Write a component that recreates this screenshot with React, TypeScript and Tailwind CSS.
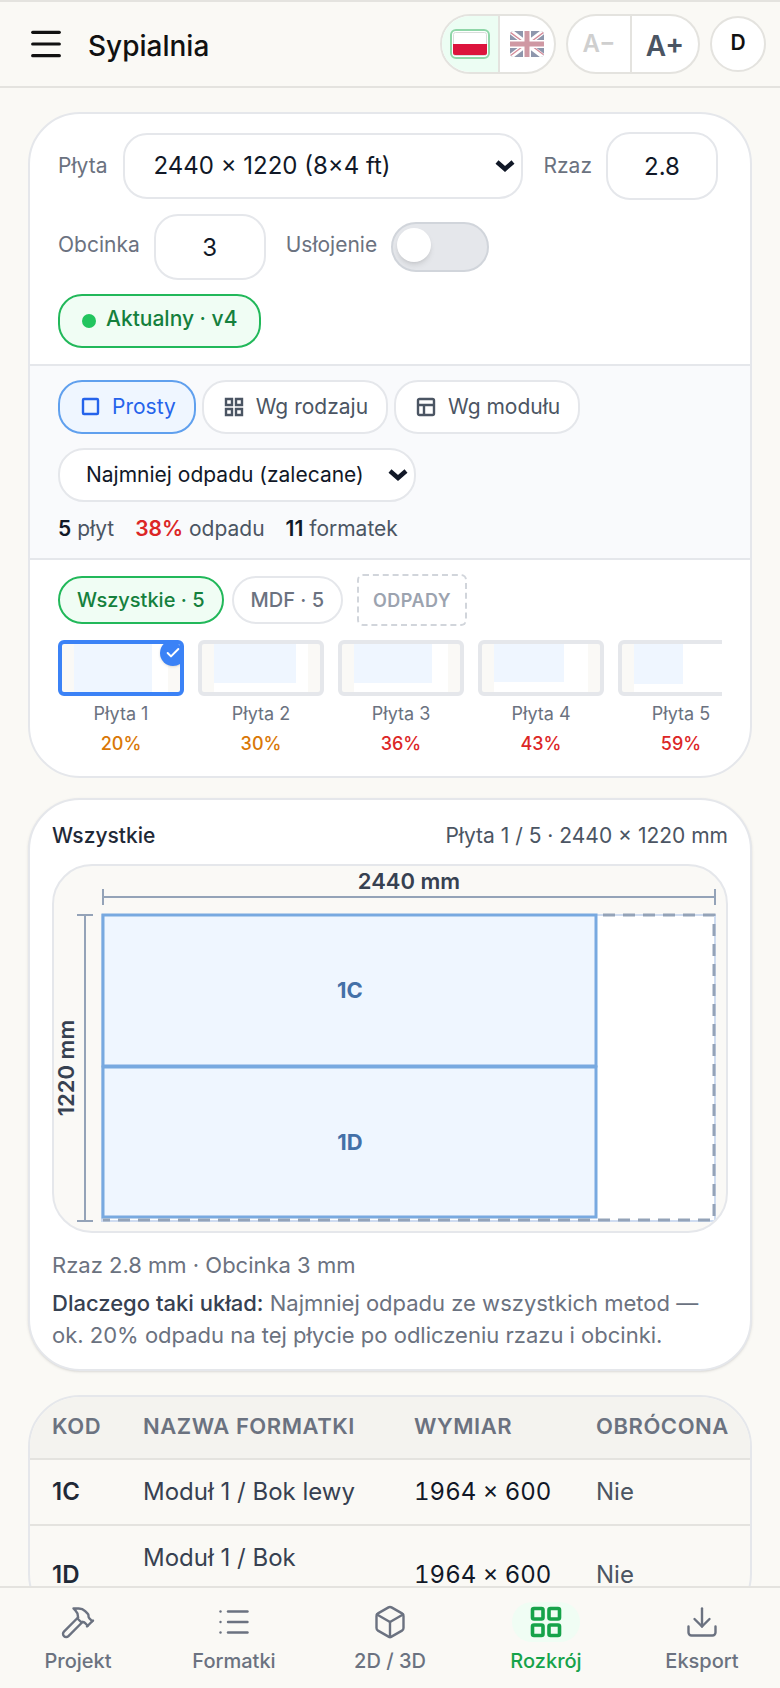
import { useState } from 'react';
import type { ReactNode } from 'react';
import { Box, Check, Download, Hammer, LayoutGrid, List, Menu } from 'lucide-react';

const sheets = [
    { id: 1, waste: 20, part: { w: 78, h: 48 } },
    { id: 2, waste: 30, part: { w: 82, h: 39 } },
    { id: 3, waste: 36, part: { w: 78, h: 39 } },
    { id: 4, waste: 43, part: { w: 70, h: 38 } },
    { id: 5, waste: 59, part: { w: 49, h: 40 } },
];

const parts = [
    { code: '1C', name: 'Moduł 1 / Bok lewy', size: '1964 × 600', rotated: 'Nie' },
    { code: '1D', name: 'Moduł 1 / Bok prawy', size: '1964 × 600', rotated: 'Nie' },
];

const navItems = [
    { label: 'Projekt', icon: Hammer },
    { label: 'Formatki', icon: List },
    { label: '2D / 3D', icon: Box },
    { label: 'Rozkrój', icon: LayoutGrid },
    { label: 'Eksport', icon: Download },
];

function FlagPL() {
    return (
        <svg className="h-6 w-[34px]" viewBox="0 0 34 24">
            <rect x="0.5" y="0.5" width="33" height="23" rx="2" fill="#fff" stroke="#d9dddb" />
            <path d="M0 12h34v9a2 2 0 0 1-2 2H2a2 2 0 0 1-2-2z" fill="#dc143c" />
        </svg>
    );
}

function FlagGB() {
    return (
        <svg className="h-[26px] w-[34px] rounded-sm" viewBox="0 0 34 26">
            <rect width="34" height="26" fill="#8e96ac" />
            <path d="M0 0l34 26M34 0L0 26" stroke="#fff" strokeWidth="5" />
            <path d="M0 1l12 9M22 15l12 9M34 1L22 10M12 16L0 25" stroke="#d58c9a" strokeWidth="1.4" />
            <path d="M17 0v26M0 13h34" stroke="#fff" strokeWidth="8" />
            <path d="M17 0v26M0 13h34" stroke="#cf98a3" strokeWidth="5" />
        </svg>
    );
}

function Chevron() {
    return (
        <svg
            className="pointer-events-none absolute top-1/2 right-2 h-3 w-5 -translate-y-1/2"
            viewBox="0 0 20 12"
            fill="none"
            stroke="#111827"
            strokeWidth="4.5"
        >
            <path d="M2 2l8 7L18 2" />
        </svg>
    );
}

function ModeButton({ active, icon, children }: { active?: boolean; icon: ReactNode; children: ReactNode }) {
    return (
        <button
            className={`flex h-[54px] items-center gap-3 rounded-[24px] border-2 pr-[18px] pl-5 text-[21px] ${
                active ? 'border-[#60a0ee] bg-[#eff6ff] text-[#2563eb]' : 'border-[#e5e7eb] bg-white text-[#4b5563]'
            }`}
        >
            <svg className="size-5" viewBox="0 0 20 20" fill="none" stroke="currentColor" strokeWidth="2.4">
                {icon}
            </svg>
            <span>{children}</span>
        </button>
    );
}

function SheetDrawing() {
    return (
        <svg className="block w-full" viewBox="0 0 672 365" role="img" aria-label="Rozkrój płyty 1">
            <rect x="48" y="49" width="613" height="306" fill="#fff" stroke="#cfdcf0" strokeWidth="2" />

            {/* wymiary */}
            <g stroke="#94a3b8" strokeWidth="2">
                <path d="M49 31H661M49 23v16M661 23v16" />
                <path d="M31 49V355M23 49h16M23 355h16" />
            </g>
            <text x="355" y="23" textAnchor="middle" fontSize="22" fontWeight="600" fill="#374151">2440 mm</text>
            <text
                transform="translate(20 202) rotate(-90)"
                textAnchor="middle"
                fontSize="22"
                fontWeight="600"
                fill="#374151"
            >
                1220 mm
            </text>

            {/* formatki */}
            <g fill="#eff6ff" stroke="#78a9e0" strokeWidth="3">
                <rect x="49" y="49" width="493" height="151" />
                <rect x="49" y="201" width="493" height="150" />
            </g>
            <g fill="#4470a8" fontSize="22" fontWeight="700" textAnchor="middle">
                <text x="296" y="132">1C</text>
                <text x="296" y="284">1D</text>
            </g>

            <path
                d="M544 49H660V354H49"
                fill="none"
                stroke="#94a3b8"
                strokeWidth="3"
                strokeDasharray="12 8"
                strokeDashoffset="15"
            />
        </svg>
    );
}

export default function App() {
    const [selected, setSelected] = useState(1);
    const [grain, setGrain] = useState(false);

    return (
        <div className="flex h-screen flex-col bg-[#faf9f5] font-[Inter,'Noto_Sans',sans-serif] text-[#111827]">
            <header className="flex h-[88px] shrink-0 items-center gap-2.5 border-y-2 border-[#e4e3df] pr-3.5 pl-[26px]">
                <button aria-label="Menu" className="text-[#111]">
                    <Menu size={40} strokeWidth={1.9} />
                </button>
                <h1 className="ml-3 flex-1 pt-1 text-[28px] font-medium text-[#111]">Sypialnia</h1>

                <div className="flex h-[60px] overflow-hidden rounded-full border-2 border-[#e4e3df] bg-white">
                    <button aria-label="Polski" className="flex w-14 items-center justify-center bg-[#ecfdf3]">
                        <span className="rounded-md border-2 border-[#8fd6a8] bg-white p-px">
                            <FlagPL />
                        </span>
                    </button>
                    <button aria-label="English" className="flex w-14 items-center justify-center border-l-2 border-[#e4e3df]">
                        <FlagGB />
                    </button>
                </div>
                <div className="flex h-[60px] overflow-hidden rounded-full border-2 border-[#e4e3df] bg-white font-semibold">
                    <button className="w-[62px] text-2xl text-[#cfcfcf]">A−</button>
                    <button className="w-[68px] border-l-2 border-[#e4e3df] pt-1 text-[28px] text-[#4b5563]">A+</button>
                </div>
                <button className="size-14 rounded-full border-2 border-[#e4e3df] bg-white pb-0.5 text-[21px] font-semibold text-[#111]">
                    D
                </button>
            </header>

            <main className="flex-1 overflow-y-auto px-7 pt-6 [scrollbar-width:none]">
                <section className="overflow-hidden rounded-[52px] border-2 border-[#e5e7eb] bg-white">
                    {/* parametry płyty */}
                    <div className="flex flex-wrap items-center gap-x-5 gap-y-3.5 px-7 pt-[18px] pb-4 text-[21px] text-[#6b7280]">
                        <div className="flex items-center gap-4">
                            <label htmlFor="board">Płyta</label>
                            <div className="relative">
                                <select
                                    id="board"
                                    className="h-[66px] w-[400px] appearance-none rounded-[24px] border-2 border-[#e5e7eb] bg-white px-[28px] text-2xl text-[#111827]"
                                >
                                    <option>2440 × 1220 (8×4 ft)</option>
                                </select>
                                <Chevron />
                            </div>
                        </div>
                        <div className="flex items-center gap-3.5">
                            <label htmlFor="kerf">Rzaz</label>
                            <input
                                id="kerf"
                                defaultValue="2.8"
                                className="h-[68px] w-28 rounded-[24px] border-2 border-[#e5e7eb] bg-white text-center text-2xl text-[#111827]"
                            />
                        </div>
                        <div className="flex items-center gap-3.5">
                            <label htmlFor="trim" className="pb-1">Obcinka</label>
                            <input
                                id="trim"
                                defaultValue="3"
                                className="h-[66px] w-28 rounded-[24px] border-2 border-[#e5e7eb] bg-white text-center text-2xl text-[#111827]"
                            />
                        </div>
                        <div className="flex items-center gap-3.5">
                            <label htmlFor="grain" className="pb-1">Usłojenie</label>
                            <input
                                id="grain"
                                type="checkbox"
                                role="switch"
                                checked={grain}
                                onChange={(e) => setGrain(e.target.checked)}
                                className="h-[50px] w-[98px] appearance-none rounded-full border-2 border-[#d1d5db] bg-[#e5e7eb] p-1 before:block before:size-[34px] before:rounded-full before:bg-white before:shadow-md checked:bg-[#22c55e] checked:before:ml-auto"
                            />
                        </div>
                        <div className="basis-full">
                            <button className="flex h-[54px] items-center gap-2.5 rounded-[24px] border-2 border-[#22b85a] bg-[#f0fdf4] px-[22px] font-medium text-[#15803d]">
                                <span className="size-3.5 rounded-full bg-[#22c55e]"></span>
                                <span className="pb-1">Aktualny · v4</span>
                            </button>
                        </div>
                    </div>

                    {/* metoda rozkroju */}
                    <div className="border-y-2 border-[#e5e7eb] bg-[#f9fafc] px-7 py-3.5">
                        <div className="flex flex-wrap gap-1.5">
                            <ModeButton active icon={<rect x="3" y="2" width="15" height="15" rx="1" />}>
                                Prosty
                            </ModeButton>
                            <ModeButton
                                icon={
                                    <path d="M2 2h6v6H2zM12 2h6v6h-6zM2 12h6v6H2zM12 12h6v6h-6z" />
                                }
                            >
                                Wg rodzaju
                            </ModeButton>
                            <ModeButton
                                icon={
                                    <>
                                        <rect x="2" y="2" width="16" height="16" rx="1.5" />
                                        <path d="M2 8h16M8 8v10" />
                                    </>
                                }
                            >
                                Wg modułu
                            </ModeButton>
                        </div>
                        <div className="relative mt-3.5 w-[358px]">
                            <select
                                aria-label="Metoda"
                                className="h-[54px] w-full appearance-none rounded-[26px] border-2 border-[#e5e7eb] bg-white px-[26px] text-[21px] text-[#111827]"
                            >
                                <option>Najmniej odpadu (zalecane)</option>
                            </select>
                            <Chevron />
                        </div>
                        <div className="mt-3 flex gap-[21px] text-[21px] leading-[30px] text-[#4b5563]">
                            <span><b className="font-semibold text-[#111827]">5</b> płyt</span>
                            <span><b className="font-semibold text-[#dc2626]">38%</b> odpadu</span>
                            <span><b className="font-semibold text-[#111827]">11</b> formatek</span>
                        </div>
                    </div>

                    {/* lista płyt */}
                    <div className="px-7 pt-3.5 pb-[18px]">
                        <div className="flex items-center gap-2 font-medium">
                            <button className="h-12 rounded-full border-2 border-[#22b85a] bg-[#f0fdf4] px-[17px] text-xl text-[#15803d]">
                                Wszystkie · 5
                            </button>
                            <button className="h-12 rounded-full border-2 border-[#e5e7eb] px-[17px] text-xl text-[#6b7280]">
                                MDF · 5
                            </button>
                            <button className="ml-1.5 h-[52px] rounded-md border-2 border-dashed border-[#d1d5db] px-3.5 pt-0.5 text-lg font-semibold tracking-wide text-[#9ca3af]">
                                ODPADY
                            </button>
                        </div>
                        <div className="mt-3.5 flex gap-3.5 overflow-x-auto [scrollbar-width:none]">
                            {sheets.map((sheet) => (
                                <button key={sheet.id} onClick={() => setSelected(sheet.id)} className="w-[126px] shrink-0">
                                    <span
                                        className={`relative flex h-14 overflow-hidden rounded-md border-4 bg-[#faf9f6] px-3 ${
                                            selected === sheet.id ? 'border-[#3b82f6]' : 'border-[#e5e7eb]'
                                        }`}
                                    >
                                        <span className="h-full w-full bg-white">
                                            <span
                                                className="block bg-[#eff6ff]"
                                                style={{ width: sheet.part.w, height: sheet.part.h }}
                                            ></span>
                                        </span>
                                        {selected === sheet.id && (
                                            <span className="absolute -top-1 -right-1.5 flex size-[26px] items-center justify-center rounded-full bg-[#3b82f6] text-white shadow-sm">
                                                <Check size={16} strokeWidth={3} />
                                            </span>
                                        )}
                                    </span>
                                    <span className="mt-1 block text-lg leading-7 text-[#6b7280]">Płyta {sheet.id}</span>
                                    <span
                                        className={`mt-0.5 block text-lg leading-7 font-medium ${
                                            sheet.waste > 30 ? 'text-[#dc2626]' : 'text-[#d97706]'
                                        }`}
                                    >
                                        {sheet.waste}%
                                    </span>
                                </button>
                            ))}
                        </div>
                    </div>
                </section>

                <section className="mt-5 rounded-[52px] border-2 border-[#e5e7eb] bg-white px-[22px] pt-5 pb-[18px] shadow-sm">
                    <div className="flex items-center justify-between text-[21px] leading-8">
                        <h2 className="font-medium text-[#1f2937]">Wszystkie</h2>
                        <span className="text-[#4b5563]">Płyta 1 / 5 · 2440 × 1220 mm</span>
                    </div>
                    <div className="mt-3 overflow-hidden rounded-[40px] border-2 border-[#e5e7eb] bg-[#faf9f6]">
                        <SheetDrawing />
                    </div>
                    <p className="mt-4 text-[22px] leading-8 text-[#6b7280]">Rzaz 2.8 mm · Obcinka 3 mm</p>
                    <p className="mt-1.5 text-[22px] leading-8 text-[#6b7280]">
                        <b className="font-medium text-[#374151]">Dlaczego taki układ:</b> Najmniej odpadu ze wszystkich
                        metod — ok. 20% odpadu na tej płycie po odliczeniu rzazu i obcinki.
                    </p>
                </section>

                <section className="mt-6 overflow-hidden rounded-[52px] border-2 border-[#e5e7eb]">
                    <table className="w-full text-left text-2xl leading-[34px]">
                        <thead className="bg-[#f4f3ef] text-[22px] tracking-wide text-[#6b7280]">
                            <tr className="h-[62px] border-b-2 border-[#e4e3df]">
                                <th className="w-[113px] pb-1 pl-[22px] font-semibold">KOD</th>
                                <th className="pb-1 font-semibold">NAZWA FORMATKI</th>
                                <th className="w-[182px] pb-1 font-semibold">WYMIAR</th>
                                <th className="w-[154px] pb-1 font-semibold">OBRÓCONA</th>
                            </tr>
                        </thead>
                        <tbody>
                            {parts.map((part) => (
                                <tr key={part.code} className="border-b-2 border-[#e4e3df] last:border-0">
                                    <td className="py-[15px] pl-[22px] font-semibold text-[#1f2937]">{part.code}</td>
                                    <td className="py-[15px] pr-12 text-[#374151]">{part.name}</td>
                                    <td className="py-[15px] tabular-nums">{part.size}</td>
                                    <td className="py-[15px] text-[#4b5563]">{part.rotated}</td>
                                </tr>
                            ))}
                        </tbody>
                    </table>
                </section>
            </main>

            <nav className="flex h-[102px] shrink-0 border-t-2 border-[#e4e3df] pt-3.5">
                {navItems.map(({ label, icon: Icon }) => {
                    const active = label === 'Rozkrój';
                    return (
                        <a
                            key={label}
                            href="#"
                            className={`flex flex-1 flex-col items-center gap-[3px] text-xl leading-8 font-medium ${
                                active ? 'text-[#16a34a]' : 'text-[#6b7280]'
                            }`}
                        >
                            <span className={`rounded-full px-4 py-0.5 ${active ? 'bg-[#f0fdf4]' : ''}`}>
                                <Icon size={36} strokeWidth={active ? 2.4 : 1.6} />
                            </span>
                            {label}
                        </a>
                    );
                })}
            </nav>
        </div>
    );
}
